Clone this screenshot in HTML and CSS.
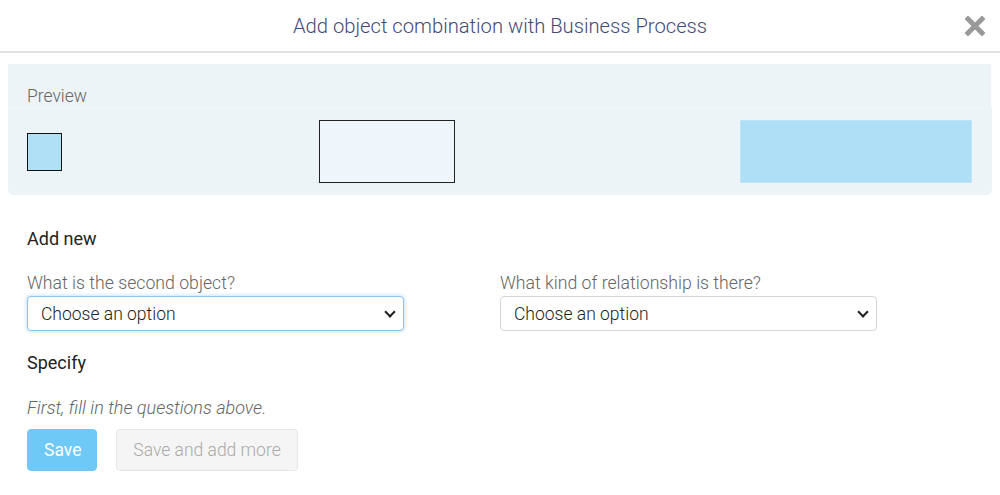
FILE: index.html
```html
<!DOCTYPE html>
<html lang="en">
<head>
  <meta charset="utf-8">
  <title>Add object combination</title>
  <link rel="stylesheet" href="styles.css">
</head>
<body>
  <div class="modal">
    <div class="modal-header">
      <h2 class="modal-title">Add object combination with Business Process</h2>
      <a href="#" class="close" title="Close">
        <svg width="20" height="20" viewBox="0 0 20 20"><path d="M3 3 L17 17 M17 3 L3 17" stroke="#999" stroke-width="5" stroke-linecap="square"/></svg>
      </a>
    </div>

    <div class="preview">
      <div class="preview-head">Preview</div>
      <div class="preview-body">
        <div class="shape-small"></div>
        <div class="shape-box"></div>
        <div class="shape-wide"></div>
      </div>
    </div>

    <div class="content">
      <h3 class="section">Add new</h3>
      <div class="row">
        <div class="field">
          <label for="obj">What is the second object?</label>
          <div class="select-wrap">
            <select id="obj" class="focused"><option>Choose an option</option></select>
          </div>
        </div>
        <div class="field">
          <label for="rel">What kind of relationship is there?</label>
          <div class="select-wrap">
            <select id="rel"><option>Choose an option</option></select>
          </div>
        </div>
      </div>

      <h3 class="section specify">Specify</h3>
      <p class="hint">First, fill in the questions above.</p>

      <div class="buttons">
        <button class="btn btn-primary">Save</button>
        <button class="btn btn-light">Save and add more</button>
      </div>
    </div>
  </div>
</body>
</html>
```

FILE: styles.css
```css
* {
    box-sizing: border-box;
}
body {
    margin: 0;
    font-family: Roboto, "Liberation Sans", Arial, sans-serif;
    background: #fff;
    color: #222;
}

.modal-header {
    position: relative;
    height: 53px;
    border-bottom: 2px solid #e2e2e2;
    display: flex;
    align-items: center;
    justify-content: center;
}
.modal-title {
    margin: 0;
    font-size: 20.2px;
    font-weight: 300;
    color: #3f4a77;
    padding-top: 1px;
}
.close {
    position: absolute;
    right: 15px;
    top: 16px;
    line-height: 0;
}

.preview {
    margin: 11px 8px 0 8px;
}
.preview-head {
    background: #edf4f8;
    height: 43px;
    padding: 22px 19px 0;
    font-size: 17.5px;
    font-weight: 300;
    color: #666;
    margin-right: 1px;
}
.preview-body {
    background: #edf4f8;
    border-radius: 0 0 6px 6px;
    height: 88px;
    display: flex;
    align-items: center;
    padding: 0 20px 0 19px;
    border-top: 1px solid #f2f7fa;
}
.shape-small {
    width: 35px;
    height: 38px;
    background: #b0e0f6;
    border: 1px solid #111;
}
.shape-box {
    width: 136px;
    height: 63px;
    background: #eef5fb;
    border: 1px solid #222;
    margin-left: 257px;
}
.shape-wide {
    width: 232px;
    height: 63px;
    background: #aedff6;
    border: 1px solid #bde6f8;
    margin-left: auto;
}

.content {
    padding: 0 27px;
}
.section {
    margin: 33px 0 0;
    font-size: 18px;
    font-weight: 400;
    color: #222;
    line-height: 22px;
}
.row {
    display: flex;
    gap: 96px;
    margin-top: 23px;
}
.field {
    width: 377px;
}
.field label {
    display: block;
    font-size: 17.7px;
    font-weight: 300;
    color: #666;
    line-height: 21px;
    margin-bottom: 2px;
}
.select-wrap {
    position: relative;
}
.select-wrap::after {
    content: "";
    position: absolute;
    right: 10px;
    top: 12px;
    width: 6px;
    height: 6px;
    border-right: 2px solid #222;
    border-bottom: 2px solid #222;
    transform: rotate(45deg);
    pointer-events: none;
}
select {
    -webkit-appearance: none;
    appearance: none;
    width: 100%;
    height: 35px;
    padding: 0 13px;
    font-family: Roboto, "Liberation Sans", Arial, sans-serif;
    font-size: 17.5px;
    font-weight: 300;
    color: #222;
    background: #fff;
    border: 1px solid #d6d6d6;
    border-radius: 4px;
    outline: none;
}
select.focused {
    border-color: #8ec3ee;
    box-shadow: 0 0 4px rgba(110, 180, 240, 0.55);
}

.specify {
    margin-top: 21px;
}
.hint {
    margin: 23px 0 0;
    font-size: 18px;
    font-weight: 300;
    font-style: italic;
    color: #666;
    line-height: 21px;
}

.buttons {
    display: flex;
    gap: 19px;
    margin-top: 11px;
}
.btn {
    height: 42px;
    font-family: Roboto, "Liberation Sans", Arial, sans-serif;
    font-size: 17.5px;
    font-weight: 300;
    border-radius: 4px;
    padding: 0 16px;
}
.btn-primary {
    width: 70px;
    background: #6fc9f6;
    border: 1px solid #6fc9f6;
    color: #fff;
    font-weight: 400;
}
.btn-light {
    width: 182px;
    background: #f5f5f5;
    border: 1px solid #e6e6e6;
    color: #aaa;
}
```
